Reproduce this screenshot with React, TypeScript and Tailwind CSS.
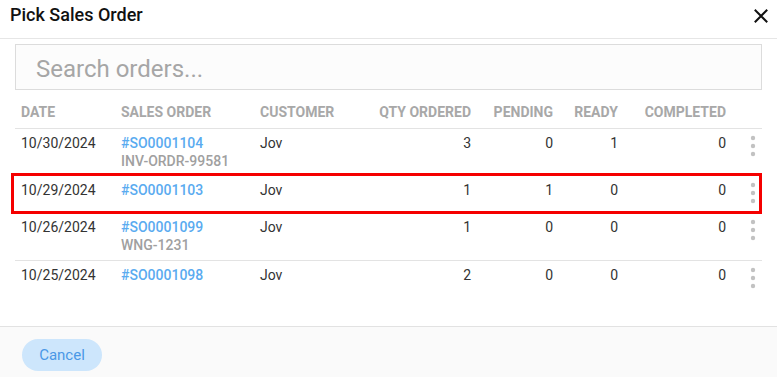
import React from "react";

type Row = {
  date: string;
  so: string;
  sub?: string;
  customer: string;
  qty: number;
  pending: number;
  ready: number;
  completed: number;
  pad: string;
  highlight?: boolean;
  border: boolean;
};

const rows: Row[] = [
  { date: "10/30/2024", so: "#SO0001104", sub: "INV-ORDR-99581", customer: "Jov", qty: 3, pending: 0, ready: 1, completed: 0, pad: "pt-[5px] pb-[4px]", border: true },
  { date: "10/29/2024", so: "#SO0001103", customer: "Jov", qty: 1, pending: 1, ready: 0, completed: 0, pad: "pt-[6px] pb-[8px]", highlight: true, border: true },
  { date: "10/26/2024", so: "#SO0001099", sub: "WNG-1231", customer: "Jov", qty: 1, pending: 0, ready: 0, completed: 0, pad: "pt-[4px] pb-[6px]", border: true },
  { date: "10/25/2024", so: "#SO0001098", customer: "Jov", qty: 2, pending: 0, ready: 0, completed: 0, pad: "pt-[5px] pb-[5px]", border: false },
];

const cols = "grid grid-cols-[100px_139px_103px_120px_82px_65px_108px_32px]";

function Kebab() {
  return (
    <svg width="24" height="24" viewBox="0 0 24 24" className="block">
      <circle cx="12" cy="4" r="2.2" fill="#c2c2c2" />
      <circle cx="12" cy="12" r="2.2" fill="#c2c2c2" />
      <circle cx="12" cy="20" r="2.2" fill="#c2c2c2" />
    </svg>
  );
}

export default function App() {
  return (
    <div
      className="w-[777px] h-[377px] flex flex-col bg-white overflow-hidden"
      style={{ fontFamily: "Roboto, 'Liberation Sans', sans-serif" }}
    >
      <div className="h-[39px] shrink-0 border-b border-[#e6e6e6] flex items-start justify-between pl-[10px] pr-[8px] pt-[3px]">
        <div className="text-[18px] leading-[24px] font-medium text-[#111]">Pick Sales Order</div>
        <svg width="16" height="16" viewBox="0 0 16 16" className="mt-[5px]">
          <path d="M2.5 2.5 L13.5 13.5 M13.5 2.5 L2.5 13.5" stroke="#111" strokeWidth="2" strokeLinecap="square" />
        </svg>
      </div>

      <div className="flex-1 px-[15px] pt-[5px]">
        <input
          className="w-full h-[46px] border border-[#dcdcdc] bg-[#fcfcfc] pl-[20px] pt-[3px] text-[24px] text-[#333] outline-none placeholder:text-[#a6a6a6]"
          placeholder="Search orders..."
        />

        <div className={`${cols} mt-[13px] pb-[7px] border-b border-[#e3e3e3] text-[14px] leading-[18px] font-bold text-[#a8a8a8] uppercase`}>
          <div className="px-[6px]">Date</div>
          <div className="px-[6px]">Sales Order</div>
          <div className="px-[6px]">Customer</div>
          <div className="px-[6px] text-right">Qty Ordered</div>
          <div className="px-[6px] text-right">Pending</div>
          <div className="px-[6px] text-right">Ready</div>
          <div className="px-[6px] text-right">Completed</div>
          <div></div>
        </div>

        {rows.map((r) => (
          <div
            key={r.so}
            className={`${cols} relative ${r.pad} ${r.border ? "border-b border-[#e3e3e3]" : ""} text-[14px] leading-[18px] text-[#333]`}
          >
            {r.highlight && (
              <div className="absolute left-[-4px] right-0 top-[-2px] bottom-[-1px] border-[3px] border-[#f50000] pointer-events-none" />
            )}
            <div className="px-[6px]">{r.date}</div>
            <div className="px-[6px]">
              <div className="font-medium text-[#5aabf0]">{r.so}</div>
              {r.sub && <div className="font-medium text-[#a0a0a0]">{r.sub}</div>}
            </div>
            <div className="px-[6px]">{r.customer}</div>
            <div className="px-[6px] text-right">{r.qty}</div>
            <div className="px-[6px] text-right">{r.pending}</div>
            <div className="px-[6px] text-right">{r.ready}</div>
            <div className="px-[6px] text-right">{r.completed}</div>
            <div className="pl-[9px]">
              <Kebab />
            </div>
          </div>
        ))}
      </div>

      <div className="h-[51px] shrink-0 border-t border-[#e2e2e2] bg-[#fafafa] pl-[22px] pt-[12px]">
        <button className="w-[80px] h-[32px] rounded-full bg-[#cde6fc] text-[15px] text-[#4a98e6]">
          Cancel
        </button>
      </div>
    </div>
  );
}
